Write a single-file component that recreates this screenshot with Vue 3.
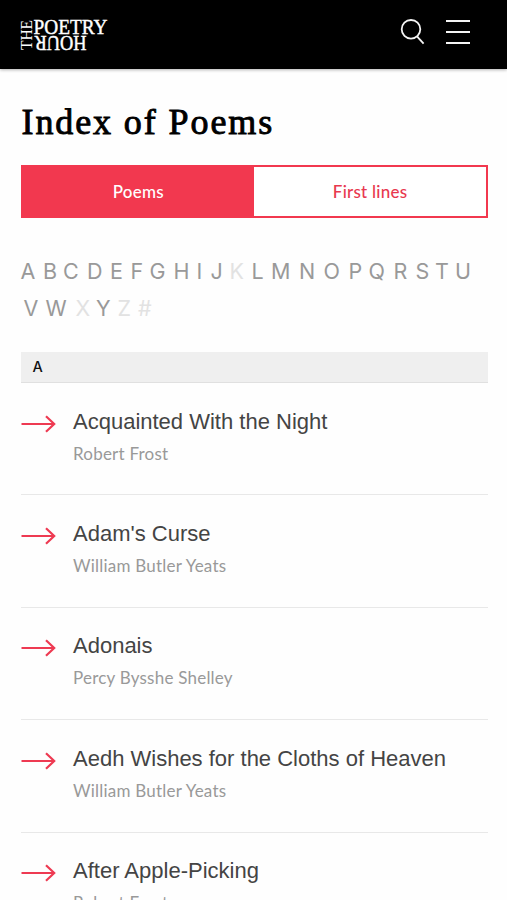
<template>
  <div class="page">
    <header class="header">
      <svg class="logo" viewBox="0 0 90 34" width="90" height="34" aria-label="The Poetry Hour">
        <g class="logo-text">
          <text transform="translate(11.8 32) rotate(-90)" class="the" textLength="30" lengthAdjust="spacingAndGlyphs">THE</text>
          <text x="13.5" y="16.3" textLength="74" lengthAdjust="spacingAndGlyphs">POETRY</text>
          <text transform="translate(66.5 18) rotate(180)" textLength="52" lengthAdjust="spacingAndGlyphs">HOUR</text>
        </g>
      </svg>
      <div class="actions">
        <svg class="search" viewBox="0 0 26 28" width="26" height="28">
          <circle cx="11" cy="11.3" r="9.3" />
          <path d="M17 18.3l6.6 7.4" />
        </svg>
        <div class="menu"><span></span><span></span><span></span></div>
      </div>
    </header>

    <main class="content">
      <h1>Index of Poems</h1>

      <div class="tabs">
        <button
          v-for="tab in tabs"
          :key="tab"
          :class="{ active: tab === current }"
          @click="current = tab"
        >{{ tab }}</button>
      </div>

      <nav class="letters">
        <div v-for="(row, i) in rows" :key="i" class="row">
          <a
            v-for="[letter, width] in row"
            :key="letter"
            :class="{ empty: emptyLetters.includes(letter) }"
            :style="{ width: width + 'px' }"
          >{{ letter }}</a>
        </div>
      </nav>

      <h2>A</h2>

      <ul class="poems">
        <li v-for="poem in poems" :key="poem.title">
          <svg class="arrow" viewBox="0 0 36 20" width="36" height="20">
            <path d="M0.5 10H33M25 2.2L33.2 10L25 17.8" />
          </svg>
          <div>
            <p class="title">{{ poem.title }}</p>
            <p class="author">{{ poem.author }}</p>
          </div>
        </li>
      </ul>
    </main>
  </div>
</template>

<script setup>
import { ref } from "vue";

const tabs = ["Poems", "First lines"];
const current = ref("Poems");

// letter and the width of its cell
const rows = [
  [
    ["A", 22.5], ["B", 20], ["C", 24], ["D", 23], ["E", 20.5], ["F", 19],
    ["G", 24], ["H", 23], ["I", 14], ["J", 19], ["K", 22], ["L", 19.5],
    ["M", 28], ["N", 24.5], ["O", 25], ["P", 20], ["Q", 25], ["R", 22],
    ["S", 19.5], ["T", 20], ["U", 18],
  ],
  [["V", 22], ["W", 30], ["X", 20.5], ["Y", 21.5], ["Z", 20.5], ["#", 20]],
];
const emptyLetters = ["K", "X", "Z", "#"];

const poems = [
  { title: "Acquainted With the Night", author: "Robert Frost" },
  { title: "Adam's Curse", author: "William Butler Yeats" },
  { title: "Adonais", author: "Percy Bysshe Shelley" },
  { title: "Aedh Wishes for the Cloths of Heaven", author: "William Butler Yeats" },
  { title: "After Apple-Picking", author: "Robert Frost" },
];
</script>

<style>
body{ margin: 0; background: #fff; overflow: hidden; }
</style>

<style scoped>
.page{
  height: 900px;
  overflow: hidden;
  background: #fefefe;
  font-family: Lato, "Liberation Sans", sans-serif;
}

.header{
  height: 69px;
  box-sizing: border-box;
  padding: 18px 37px 0 20px;
  display: flex;
  justify-content: space-between;
  background: #000;
  box-shadow: 0 1px 3px rgba(0,0,0,0.3);
}
.logo{ display: block; overflow: visible; }
.logo-text{
  font-family: "Liberation Serif", serif;
  font-size: 21.5px;
  fill: #fff;
  stroke: #fff;
  stroke-width: 0.45;
}
.logo-text .the{ font-size: 17px; stroke: none; }

.actions{ display: flex; gap: 20px; }
.search{
  fill: none;
  stroke: #f4f4f4;
  stroke-width: 1.8;
}
.menu{
  width: 24px;
  padding-top: 2px;
  display: flex;
  flex-direction: column;
  gap: 9px;
}
.menu span{ height: 2px; background: #f4f4f4; }

.content{ padding: 32px 19px 0 20.5px; }

h1{
  margin: 0;
  height: 64px;
  padding-left: 1px;
  box-sizing: border-box;
  line-height: 43px;
  font-family: "Liberation Serif", serif;
  font-size: 36px;
  font-weight: 400;
  letter-spacing: 1.9px;
  -webkit-text-stroke: 0.9px #000;
  white-space: nowrap;
}

.tabs{
  display: grid;
  grid-template-columns: 1fr 1fr;
  height: 53px;
  box-sizing: border-box;
  border: 2px solid #f2384f;
}
button{
  border: 0;
  padding: 0;
  background: #fff;
  color: #e8384f;
  font: 500 17px Lato, sans-serif;
  letter-spacing: 0.25px;
}
button.active{ background: #f2384f; color: #fff; }

.letters{
  padding-top: 35px;
  height: 99px;
  font-family: Inter, sans-serif;
  font-size: 21.5px;
  line-height: 37px;
  color: #999;
}
.row{ display: flex; height: 37px; }
.row + .row{ padding-left: 3px; }
.row a{ flex: none; }
.row .empty{ color: #e2e2e2; }

h2{
  margin: 0;
  height: 31px;
  box-sizing: border-box;
  padding-left: 12px;
  border-bottom: 1px solid #e0e0e0;
  background: #efefef;
  font-family: Inter, sans-serif;
  font-size: 14.5px;
  font-weight: 500;
  line-height: 30px;
  color: #111;
}

.poems{ margin: 0; padding: 0; list-style: none; }
li{
  display: flex;
  gap: 16.5px;
  height: 112.4px;
  box-sizing: border-box;
  padding-top: 23.5px;
  border-bottom: 1px solid #e8e8e8;
}
.arrow{
  flex: none;
  margin-top: 7px;
  fill: none;
  stroke: #ee3a52;
  stroke-width: 2.2;
}
p{ margin: 0; white-space: nowrap; }
.title{
  font-family: "Liberation Sans", sans-serif;
  font-size: 22px;
  line-height: 29px;
  color: #444;
}
.author{
  margin-top: 6px;
  font-size: 17px;
  line-height: 24px;
  letter-spacing: 0.22px;
  color: #999;
}
</style>
